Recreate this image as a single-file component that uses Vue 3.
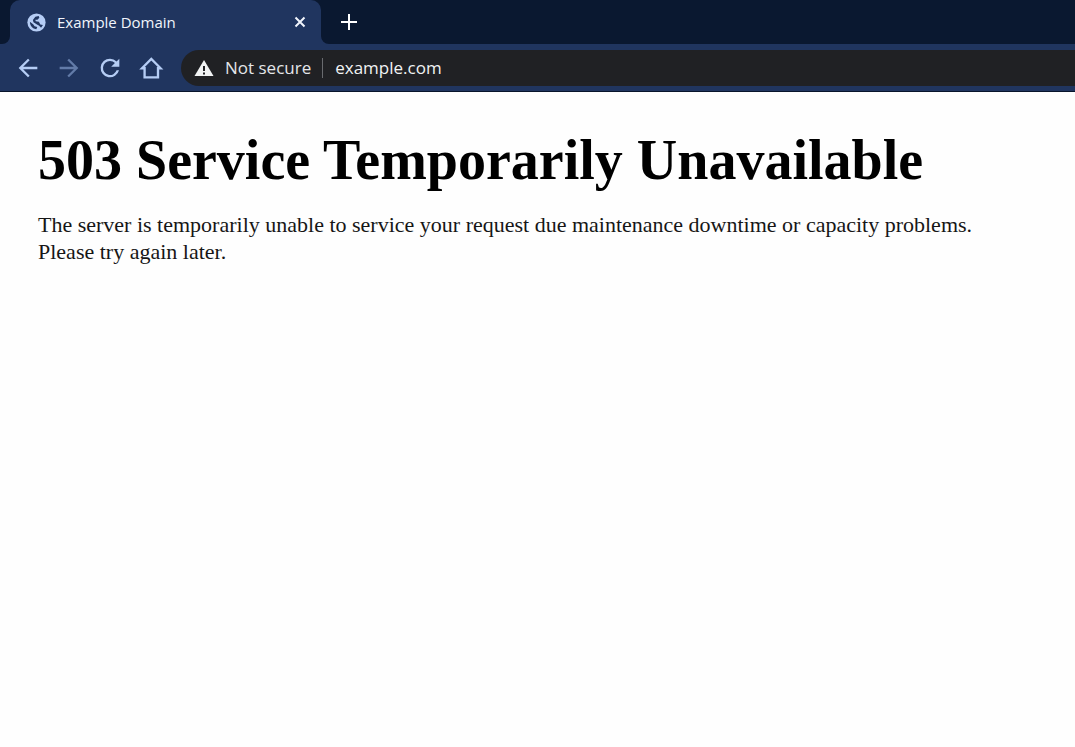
<script setup>
import { ref } from 'vue'

const address = ref('example.com')
</script>

<template>
  <div class="browser">
    <header class="chrome">
      <div class="tab-strip">
        <div class="tab">
          <svg class="globe" viewBox="0 0 20 20" aria-hidden="true">
            <circle cx="10" cy="10" r="9.600" fill="#b5cdf5" />
            <path d="M12.300 3.200L13 5L11 7.200H8.800L9.200 8.800L12.500 9.300L14 12L16.800 12.500L14.800 15.500L12.500 13.200L10.500 12L6.800 9.800L6.200 7.300L8.800 4z" fill="#20355f" />
            <path d="M3 9.200L6.500 11.800L8 14L10.800 14.800L9.800 17L7 16.400Q3.200 14 3 9.200z" fill="#20355f" />
          </svg>
          <span class="title">Example Domain</span>
          <button class="close" type="button" aria-label="Close tab">
            <svg viewBox="0 0 12 12"><path d="M1.500 1.500l9 9M10.500 1.500l-9 9" /></svg>
          </button>
        </div>
        <div class="strip-rest">
          <button class="new-tab" type="button" aria-label="New tab">
            <svg viewBox="0 0 16 16"><path d="M8 0v16M0 8h16" /></svg>
          </button>
        </div>
      </div>
      <nav class="toolbar" aria-label="Browser controls">
        <button class="tool" type="button" aria-label="Back">
          <svg viewBox="0 0 24 24"><path d="M20 11H7.830l5.590-5.590L12 4l-8 8 8 8 1.410-1.410L7.830 13H20v-2z" /></svg>
        </button>
        <button class="tool" type="button" aria-label="Forward" disabled>
          <svg viewBox="0 0 24 24"><path d="M12 4l-1.410 1.410L16.170 11H4v2h12.170l-5.580 5.590L12 20l8-8z" /></svg>
        </button>
        <button class="tool" type="button" aria-label="Reload">
          <svg viewBox="0 0 24 24"><path d="M17.650 6.350A7.958 7.958 0 0 0 12 4a8 8 0 1 0 7.730 10h-2.080A6 6 0 1 1 12 6c1.660 0 3.140.690 4.220 1.780L13 11h7V4l-2.350 2.350z" /></svg>
        </button>
        <button class="tool" type="button" aria-label="Home">
          <svg viewBox="0 0 24 24"><path class="line" d="M4.300 12.200H6.500V20h11.500v-7.800h2.200L12.250 4.300z" /></svg>
        </button>
        <div class="omnibox">
          <svg class="warning" viewBox="0 0 20 18" aria-hidden="true">
            <path fill="#f1f3f4" d="M10 1l9.500 16H.5z" />
            <path fill="#202124" d="M9 7h2v5H9zM9 13.500h2v2H9z" />
          </svg>
          <label class="security" for="address">Not secure</label>
          <input id="address" v-model="address" class="address" type="text" spellcheck="false" />
        </div>
      </nav>
    </header>
    <main class="page">
      <h1>503 Service Temporarily Unavailable</h1>
      <p>
        The server is temporarily unable to service your request due maintenance downtime or capacity problems.
        Please try again later.
      </p>
    </main>
  </div>
</template>

<style>
body {
  margin: 0;
  background: #fefefe;
}
</style>

<style scoped>
.browser {
  min-height: 100vh;
  overflow: hidden;
}

.chrome {
  background: #20355f;
  border-bottom: 1px solid #08142b;
  font-family: "Open Sans", "Noto Sans", sans-serif;
}

button {
  display: flex;
  align-items: center;
  justify-content: center;
  padding: 0;
  border: 0;
  background: none;
}

.tab-strip {
  display: flex;
  height: 44px;
  background: linear-gradient(#0a1830 50%, #20355f 50%);
}

.tab-strip::before {
  content: "";
  width: 10px;
  background: #0a1830;
  border-radius: 0 0 8px 0;
}

.tab {
  display: flex;
  align-items: center;
  box-sizing: border-box;
  width: 311px;
  padding: 0 11px 0 17px;
  border-radius: 10px 10px 0 0;
  background: #20355f;
}

.globe {
  width: 19px;
  height: 19px;
}

.title {
  flex: 1;
  margin-left: 11px;
  color: #f1f5fc;
  font-size: 15px;
  line-height: 22px;
}

.close {
  width: 20px;
  height: 20px;
}

.close svg {
  width: 12px;
  height: 12px;
  stroke: #f1f5fc;
  stroke-width: 2;
}

.strip-rest {
  display: flex;
  flex: 1;
  align-items: center;
  padding-left: 14px;
  background: #0a1830;
  border-radius: 0 0 0 8px;
}

.new-tab {
  width: 28px;
  height: 28px;
}

.new-tab svg {
  width: 16px;
  height: 16px;
  stroke: #ffffff;
  stroke-width: 2;
}

.toolbar {
  display: flex;
  align-items: center;
  gap: 13px;
  height: 47px;
  padding-left: 14px;
}

.tool {
  flex: none;
  width: 28px;
  height: 28px;
}

.tool svg {
  width: 28px;
  height: 28px;
  fill: #b5cdf5;
}

.tool:disabled svg {
  fill: #627ba8;
}

.tool .line {
  fill: none;
  stroke: #b5cdf5;
  stroke-width: 2;
}

.omnibox {
  display: flex;
  flex: 1;
  align-items: center;
  height: 36px;
  margin-left: 3px;
  padding-left: 13px;
  border-radius: 18px 0 0 18px;
  background: #202124;
}

.warning {
  width: 20px;
  height: 18px;
}

.security {
  margin-left: 11px;
  padding-right: 11px;
  border-right: 1px solid #696b6f;
  color: #e4e6e9;
  font-size: 17px;
  line-height: 20px;
}

.address {
  flex: 1;
  min-width: 0;
  margin-left: 12px;
  padding: 0;
  border: 0;
  outline: 0;
  background: none;
  color: #f1f3f4;
  font: 17px/24px "Open Sans", "Noto Sans", sans-serif;
}

.page {
  padding: 37px 38px;
  color: #000000;
  font-family: "Liberation Serif", "Times New Roman", serif;
}

h1 {
  margin: 0;
  font-size: 56px;
  line-height: 62px;
}

p {
  max-width: 960px;
  margin: 20px 0 0;
  color: #161616;
  font-size: 22px;
  line-height: 27px;
}
</style>
